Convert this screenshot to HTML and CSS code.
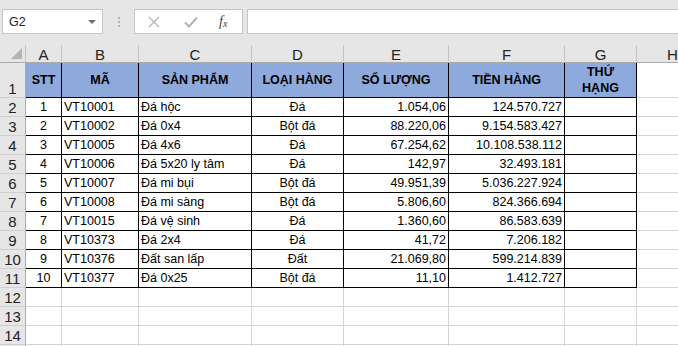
FILE: index.html
```html
<!DOCTYPE html>
<html lang="vi">
<head>
  <meta charset="UTF-8">
  <title>Bảng hàng</title>
  <link rel="stylesheet" href="styles.css">
</head>
<body>

  <!-- Thanh công thức -->
  <div class="toolbar">
    <div class="namebox">
      <span>G2</span>
      <span class="caret"></span>
    </div>
    <div class="dots"><i></i><i></i><i></i></div>
    <div class="fxbox">
      <svg class="ico" width="12" height="12" viewBox="0 0 12 12"><path d="M1 1 L11 11 M11 1 L1 11" stroke="#b3b3b3" stroke-width="1.3" fill="none"/></svg>
      <svg class="ico" width="14" height="12" viewBox="0 0 14 12"><path d="M1 6.5 L5 10.5 L13 1.5" stroke="#b3b3b3" stroke-width="2" fill="none"/></svg>
      <span class="fx">f<sub>x</sub></span>
    </div>
    <div class="formula"></div>
  </div>

  <!-- Bảng tính -->
  <div class="sheet" id="sheet">
    <div class="ch corner"><span class="tri"></span></div>
    <div class="ch">A</div>
    <div class="ch">B</div>
    <div class="ch">C</div>
    <div class="ch">D</div>
    <div class="ch">E</div>
    <div class="ch">F</div>
    <div class="ch">G</div>
    <div class="ch">H</div>

    <div class="rh rh-tall">1</div>
    <div class="c t hd">STT</div>
    <div class="c t hd">MÃ</div>
    <div class="c t hd">SẢN PHẨM</div>
    <div class="c t hd">LOẠI HÀNG</div>
    <div class="c t hd">SỐ LƯỢNG</div>
    <div class="c t hd">TIỀN HÀNG</div>
    <div class="c t hd">THỨ<br>HẠNG</div>
    <div class="c"></div>
  </div>

  <script>
    const rows = [
      ['1', 'VT10001', 'Đá hộc', 'Đá', '1.054,06', '124.570.727'],
      ['2', 'VT10002', 'Đá 0x4', 'Bột đá', '88.220,06', '9.154.583.427'],
      ['3', 'VT10005', 'Đá 4x6', 'Đá', '67.254,62', '10.108.538.112'],
      ['4', 'VT10006', 'Đá 5x20 ly tâm', 'Đá', '142,97', '32.493.181'],
      ['5', 'VT10007', 'Đá mi bụi', 'Bột đá', '49.951,39', '5.036.227.924'],
      ['6', 'VT10008', 'Đá mi sàng', 'Bột đá', '5.806,60', '824.366.694'],
      ['7', 'VT10015', 'Đá vệ sinh', 'Đá', '1.360,60', '86.583.639'],
      ['8', 'VT10373', 'Đá 2x4', 'Đá', '41,72', '7.206.182'],
      ['9', 'VT10376', 'Đất san lấp', 'Đất', '21.069,80', '599.214.839'],
      ['10', 'VT10377', 'Đá 0x25', 'Bột đá', '11,10', '1.412.727']
    ];
    const align = ['ctr', 'lft', 'lft', 'ctr', 'rgt', 'rgt', ''];
    const sheet = document.getElementById('sheet');

    function cell(cls, text) {
      const d = document.createElement('div');
      d.className = cls;
      d.textContent = text || '';
      sheet.appendChild(d);
    }

    rows.forEach(function(r, i) {
      cell('rh', i + 2);
      r.concat(['']).forEach(function(v, j) {
        cell('c t ' + align[j], v);
      });
      cell('c', '');
    });

    // leere Zeilen unten (Zeile 15 nur angeschnitten, ohne Nummer)
    for (let n = 12; n <= 15; n++) {
      cell('rh', n < 15 ? n : '');
      for (let j = 0; j < 8; j++) cell('c', '');
    }
  </script>

</body>
</html>
```

FILE: styles.css
```css
body {
  margin: 0;
  background-color: #ffffff;
  font-family: 'Liberation Sans', Arial, sans-serif;
  color: #000000;
  overflow: hidden;
  height: 346px;
}

.toolbar {
  height: 45px;
  box-sizing: border-box;
  background-color: #e6e6e6;
  display: flex;
  align-items: flex-start;
  padding-top: 9px;
}

.namebox {
  margin-left: 2px;
  width: 101px;
  height: 25px;
  box-sizing: border-box;
  background-color: #ffffff;
  border: 1px solid #c6c6c6;
  display: flex;
  align-items: center;
  justify-content: space-between;
  padding: 0 6px 0 6px;
  font-size: 12.5px;
  color: #222;
}

.caret {
  width: 0;
  height: 0;
  border-left: 4px solid transparent;
  border-right: 4px solid transparent;
  border-top: 4px solid #6d6d6d;
}

.dots {
  width: 31px;
  height: 25px;
  display: flex;
  flex-direction: column;
  align-items: center;
  justify-content: center;
  gap: 2px;
}

.dots i {
  width: 2px;
  height: 2px;
  background-color: #b5b5b5;
}

.fxbox {
  width: 109px;
  height: 25px;
  box-sizing: border-box;
  background-color: #ffffff;
  border: 1px solid #c6c6c6;
  display: flex;
  align-items: center;
  padding-left: 13px;
  gap: 24px;
}

.ico {
  display: block;
}

.fx {
  font-family: 'Liberation Serif', serif;
  font-style: italic;
  font-size: 14px;
  color: #444;
  margin-left: -3px;
}

.fx sub {
  font-size: 10px;
  vertical-align: -1px;
}

.formula {
  margin-left: 4px;
  flex: 1;
  height: 25px;
  box-sizing: border-box;
  background-color: #ffffff;
  border: 1px solid #c6c6c6;
  border-right: none;
}

.sheet {
  display: grid;
  width: 709px;
  grid-template-columns: 26px 36px 77px 113px 92px 105px 116px 72px 72px;
  grid-template-rows: 18px 35px repeat(14, 19px);
}

.sheet > div {
  box-sizing: border-box;
  border-right: 1px solid #d4d4d4;
  border-bottom: 1px solid #d4d4d4;
  font-size: 12.5px;
  white-space: nowrap;
  overflow: hidden;
  display: flex;
  align-items: center;
}

.sheet > .ch {
  background-color: #e6e6e6;
  border-right-color: #c3c3c3;
  border-bottom-color: #ababab;
  justify-content: center;
  font-size: 15px;
  color: #222;
  padding-top: 1px;
}

.corner {
  position: relative;
}

.tri {
  position: absolute;
  right: 3px;
  bottom: 3px;
  width: 0;
  height: 0;
  border-left: 11px solid transparent;
  border-bottom: 11px solid #b4b4b4;
}

.sheet > .rh {
  background-color: #e6e6e6;
  border-right-color: #ababab;
  border-bottom-color: #cfcfcf;
  justify-content: center;
  align-items: flex-end;
  font-size: 15px;
  color: #222;
  padding-bottom: 0;
}

.sheet > .t {
  border-right-color: #000000;
  border-bottom-color: #000000;
}

.sheet > .hd {
  background-color: #8ea9db;
  font-weight: bold;
  justify-content: center;
  text-align: center;
  line-height: 16px;
}

.ctr {
  justify-content: center;
}

.lft {
  padding-left: 2px;
}

.rgt {
  justify-content: flex-end;
  padding-right: 2px;
}
```
